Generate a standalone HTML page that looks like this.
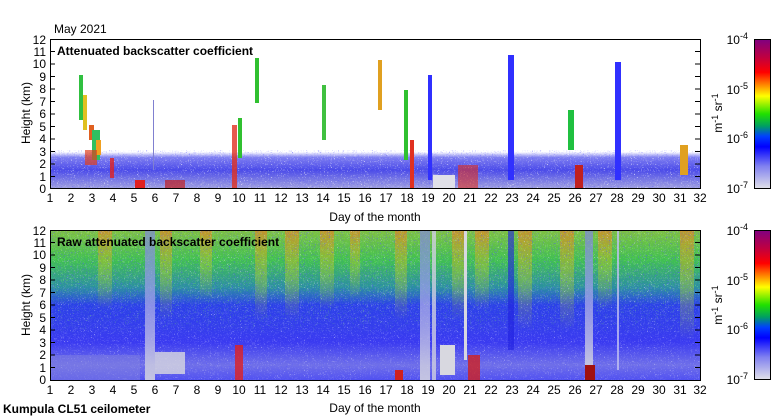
<!DOCTYPE html>
<html><head><meta charset="utf-8"><style>
html,body{margin:0;padding:0;background:#fff;width:780px;height:420px;overflow:hidden}
svg{display:block}
text{font-family:"Liberation Sans",sans-serif;font-size:12px;fill:#000}
</style></head><body>
<svg width="780" height="420" viewBox="0 0 780 420" xmlns="http://www.w3.org/2000/svg">
<defs>
<linearGradient id="cb" x1="0" y1="0" x2="0" y2="1">
<stop offset="0" stop-color="#800080"/><stop offset="0.12" stop-color="#c00040"/>
<stop offset="0.22" stop-color="#ff0000"/><stop offset="0.3" stop-color="#ff8000"/>
<stop offset="0.38" stop-color="#ffff00"/><stop offset="0.5" stop-color="#20e000"/>
<stop offset="0.58" stop-color="#00a060"/><stop offset="0.65" stop-color="#0040ff"/>
<stop offset="0.72" stop-color="#0000ff"/><stop offset="0.85" stop-color="#8080f0"/>
<stop offset="1" stop-color="#e0e0e8"/></linearGradient>
<linearGradient id="band" x1="0" y1="0" x2="0" y2="1">
<stop offset="0" stop-color="#fff"/><stop offset="0.15" stop-color="#8080f0"/>
<stop offset="0.5" stop-color="#4a4ae8"/><stop offset="1" stop-color="#a0a0e0"/></linearGradient>
<linearGradient id="raw" x1="0" y1="0" x2="0" y2="1">
<stop offset="0" stop-color="#80c040"/><stop offset="0.2" stop-color="#40c050"/>
<stop offset="0.38" stop-color="#2a90a0"/><stop offset="0.5" stop-color="#2a40e8"/>
<stop offset="0.75" stop-color="#3a3af0"/><stop offset="0.9" stop-color="#7070e8"/>
<stop offset="1" stop-color="#5050f0"/></linearGradient>
<linearGradient id="warm" x1="0" y1="0" x2="0" y2="1">
<stop offset="0" stop-color="#e08020" stop-opacity="0.7"/><stop offset="0.5" stop-color="#c0d020" stop-opacity="0.4"/><stop offset="1" stop-color="#c0d020" stop-opacity="0"/></linearGradient>
<linearGradient id="pale" x1="0" y1="0" x2="0" y2="1">
<stop offset="0" stop-color="#8080f0" stop-opacity="0.6"/><stop offset="1" stop-color="#d0d0e0" stop-opacity="0.9"/></linearGradient>
<linearGradient id="fadeW" x1="0" y1="0" x2="0" y2="1">
<stop offset="0" stop-color="#fff" stop-opacity="0"/><stop offset="0.5" stop-color="#fff" stop-opacity="1"/><stop offset="1" stop-color="#fff" stop-opacity="1"/></linearGradient>
<filter id="nzw" x="0" y="0" width="1" height="1"><feTurbulence type="turbulence" baseFrequency="0.7" numOctaves="1" seed="3"/><feColorMatrix values="0 0 0 0 1  0 0 0 0 1  0 0 0 0 1  0 0 0 3 -0.9"/></filter>
<filter id="nzg" x="0" y="0" width="1" height="1"><feTurbulence type="turbulence" baseFrequency="0.6" numOctaves="1" seed="9"/><feColorMatrix values="0 0 0 0 0.2  0 0 0 0 0.85  0 0 0 0 0.1  0 0 0 3 -0.8"/></filter>
<filter id="nzb" x="0" y="0" width="1" height="1"><feTurbulence type="turbulence" baseFrequency="0.65" numOctaves="1" seed="5"/><feColorMatrix values="0 0 0 0 0.1  0 0 0 0 0.1  0 0 0 0 1  0 0 0 3 -0.8"/></filter>
<clipPath id="cTop"><rect x="50" y="39" width="650" height="149"/></clipPath>
<clipPath id="cBot"><rect x="50" y="230" width="650" height="150"/></clipPath>
<mask id="mUp"><rect x="50" y="230" width="650" height="150" fill="url(#mg)"/></mask>
<linearGradient id="mg" x1="0" y1="0" x2="0" y2="1"><stop offset="0" stop-color="#fff"/><stop offset="0.55" stop-color="#fff" stop-opacity="0.5"/><stop offset="0.7" stop-color="#000"/></linearGradient>
</defs>

<text x="54" y="33">May 2021</text>

<!-- TOP PLOT -->
<g clip-path="url(#cTop)">
<rect x="50" y="39" width="650" height="149" fill="#fff"/>
<rect x="50" y="152" width="650" height="36" fill="url(#band)"/>
<rect x="50" y="150" width="650" height="38" filter="url(#nzb)" opacity="0.6"/>
<rect x="50" y="150" width="650" height="38" filter="url(#nzw)" opacity="0.8"/>
<rect x="50" y="146" width="650" height="14" fill="url(#fadeW)" opacity="0" />
<!-- clouds -->
<rect x="79" y="75" width="4" height="45" fill="#30c040"/>
<rect x="83" y="95" width="4" height="35" fill="#e0c020"/>
<rect x="89" y="125" width="5" height="15" fill="#e06020"/>
<rect x="92" y="130" width="8" height="30" fill="#30c060"/>
<rect x="96" y="140" width="5" height="15" fill="#f0a020"/>
<rect x="85" y="150" width="12" height="15" fill="#e04020" opacity="0.7"/>
<rect x="110" y="158" width="4" height="20" fill="#e02020" opacity="0.8"/>
<rect x="135" y="180" width="10" height="8" fill="#e02020"/>
<rect x="165" y="180" width="20" height="8" fill="#c02020" opacity="0.7"/>
<rect x="153" y="100" width="1" height="70" fill="#8080d0"/>
<rect x="232" y="125" width="5" height="63" fill="#e03020" opacity="0.8"/>
<rect x="238" y="118" width="4" height="40" fill="#30c030"/>
<rect x="255" y="58" width="4" height="45" fill="#30c030"/>
<rect x="322" y="85" width="4" height="55" fill="#40c040"/>
<rect x="378" y="60" width="4" height="50" fill="#e0a020"/>
<rect x="404" y="90" width="4" height="70" fill="#30c030"/>
<rect x="410" y="140" width="4" height="48" fill="#e03020"/>
<rect x="428" y="75" width="4" height="105" fill="#3030ff"/>
<rect x="433" y="175" width="22" height="13" fill="#e0e0e8"/>
<rect x="458" y="165" width="20" height="23" fill="#e03020" opacity="0.6"/>
<rect x="508" y="55" width="6" height="125" fill="#3030ff"/>
<rect x="568" y="110" width="6" height="40" fill="#20c040"/>
<rect x="575" y="165" width="8" height="23" fill="#c02020"/>
<rect x="615" y="62" width="6" height="118" fill="#3030ff"/>
<rect x="680" y="145" width="8" height="30" fill="#e0a020"/>
</g>
<rect x="50.5" y="39.5" width="650" height="149" fill="none" stroke="#000" stroke-width="1"/>
<text x="57" y="55" style="font-weight:bold">Attenuated backscatter coefficient</text>

<!-- BOTTOM PLOT -->
<g clip-path="url(#cBot)">
<rect x="50" y="230" width="650" height="150" fill="url(#raw)"/>
<g>
<rect x="98" y="230" width="14" height="80" fill="url(#warm)"/>
<rect x="160" y="230" width="12" height="90" fill="url(#warm)"/>
<rect x="200" y="230" width="12" height="70" fill="url(#warm)"/>
<rect x="255" y="230" width="12" height="90" fill="url(#warm)"/>
<rect x="285" y="230" width="14" height="90" fill="url(#warm)"/>
<rect x="320" y="230" width="14" height="80" fill="url(#warm)"/>
<rect x="350" y="230" width="10" height="70" fill="url(#warm)"/>
<rect x="395" y="230" width="12" height="90" fill="url(#warm)"/>
<rect x="452" y="230" width="12" height="90" fill="url(#warm)"/>
<rect x="475" y="230" width="14" height="80" fill="url(#warm)"/>
<rect x="518" y="230" width="14" height="100" fill="url(#warm)"/>
<rect x="560" y="230" width="14" height="100" fill="url(#warm)"/>
<rect x="598" y="230" width="14" height="80" fill="url(#warm)"/>
<rect x="680" y="230" width="14" height="110" fill="url(#warm)"/>
</g>
<rect x="50" y="230" width="650" height="150" filter="url(#nzg)" mask="url(#mUp)" opacity="0.8"/>
<rect x="50" y="230" width="650" height="150" filter="url(#nzb)" opacity="0.7"/>
<rect x="50" y="230" width="650" height="150" filter="url(#nzw)" opacity="0.5"/>
<rect x="145" y="230" width="10" height="150" fill="url(#pale)"/>
<rect x="155" y="352" width="30" height="22" fill="#d8d8e0" opacity="0.8"/>
<rect x="420" y="230" width="10" height="150" fill="url(#pale)"/>
<rect x="432" y="230" width="4" height="150" fill="#d0d0e0" opacity="0.8"/>
<rect x="440" y="345" width="15" height="30" fill="#d8d8e0"/>
<rect x="464" y="230" width="3" height="130" fill="#d8d8e0"/>
<rect x="508" y="230" width="6" height="120" fill="#2020e0" opacity="0.6"/>
<rect x="585" y="230" width="8" height="140" fill="url(#pale)"/>
<rect x="617" y="230" width="2" height="140" fill="#c0c0f0" opacity="0.8"/>
<rect x="50" y="355" width="90" height="25" fill="#8080e0" opacity="0.5"/>
<rect x="395" y="370" width="8" height="10" fill="#d02020"/>
<rect x="468" y="355" width="12" height="25" fill="#d02020" opacity="0.8"/>
<rect x="585" y="365" width="10" height="15" fill="#a01010"/>
<rect x="235" y="345" width="8" height="35" fill="#e02020" opacity="0.8"/>
</g>
<rect x="50.5" y="230.5" width="650" height="150" fill="none" stroke="#000"/>
<text x="57" y="246" style="font-weight:bold">Raw attenuated backscatter coefficient</text>

<!-- Y ticks -->
<g stroke="#000" stroke-width="1">
<path d="M50 176.5h5M50 164h5M50 151.5h5M50 139h5M50 126.5h5M50 114h5M50 101.5h5M50 89h5M50 76.5h5M50 64h5M50 51.5h5M695 176.5h5M695 164h5M695 151.5h5M695 139h5M695 126.5h5M695 114h5M695 101.5h5M695 89h5M695 76.5h5M695 64h5M695 51.5h5"/>
<path d="M50 367.5h5M50 355h5M50 342.5h5M50 330h5M50 317.5h5M50 305h5M50 292.5h5M50 280h5M50 267.5h5M50 255h5M50 242.5h5M695 367.5h5M695 355h5M695 342.5h5M695 330h5M695 317.5h5M695 305h5M695 292.5h5M695 280h5M695 267.5h5M695 255h5M695 242.5h5"/>
</g>
<g text-anchor="end">
<text x="46" y="193">0</text><text x="46" y="181">1</text><text x="46" y="168">2</text><text x="46" y="156">3</text><text x="46" y="143">4</text><text x="46" y="131">5</text><text x="46" y="118">6</text><text x="46" y="106">7</text><text x="46" y="93">8</text><text x="46" y="81">9</text><text x="46" y="68">10</text><text x="46" y="56">11</text><text x="46" y="44">12</text>
<text x="46" y="384">0</text><text x="46" y="372">1</text><text x="46" y="359">2</text><text x="46" y="347">3</text><text x="46" y="334">4</text><text x="46" y="322">5</text><text x="46" y="309">6</text><text x="46" y="297">7</text><text x="46" y="284">8</text><text x="46" y="272">9</text><text x="46" y="259">10</text><text x="46" y="247">11</text><text x="46" y="235">12</text>
</g>
<text transform="translate(30,113) rotate(-90)" text-anchor="middle">Height (km)</text>
<text transform="translate(30,305) rotate(-90)" text-anchor="middle">Height (km)</text>

<!-- X labels -->
<g text-anchor="middle">
<text x="50" y="202">1</text><text x="71" y="202">2</text><text x="92" y="202">3</text><text x="113" y="202">4</text><text x="134" y="202">5</text><text x="155" y="202">6</text><text x="176" y="202">7</text><text x="197" y="202">8</text><text x="218" y="202">9</text><text x="239" y="202">10</text><text x="260" y="202">11</text><text x="281" y="202">12</text><text x="302" y="202">13</text><text x="323" y="202">14</text><text x="344" y="202">15</text><text x="365" y="202">16</text><text x="386" y="202">17</text><text x="407" y="202">18</text><text x="428" y="202">19</text><text x="449" y="202">20</text><text x="470" y="202">21</text><text x="491" y="202">22</text><text x="512" y="202">23</text><text x="533" y="202">24</text><text x="554" y="202">25</text><text x="575" y="202">26</text><text x="596" y="202">27</text><text x="617" y="202">28</text><text x="638" y="202">29</text><text x="659" y="202">30</text><text x="680" y="202">31</text><text x="700" y="202">32</text>
<text x="50" y="394">1</text><text x="71" y="394">2</text><text x="92" y="394">3</text><text x="113" y="394">4</text><text x="134" y="394">5</text><text x="155" y="394">6</text><text x="176" y="394">7</text><text x="197" y="394">8</text><text x="218" y="394">9</text><text x="239" y="394">10</text><text x="260" y="394">11</text><text x="281" y="394">12</text><text x="302" y="394">13</text><text x="323" y="394">14</text><text x="344" y="394">15</text><text x="365" y="394">16</text><text x="386" y="394">17</text><text x="407" y="394">18</text><text x="428" y="394">19</text><text x="449" y="394">20</text><text x="470" y="394">21</text><text x="491" y="394">22</text><text x="512" y="394">23</text><text x="533" y="394">24</text><text x="554" y="394">25</text><text x="575" y="394">26</text><text x="596" y="394">27</text><text x="617" y="394">28</text><text x="638" y="394">29</text><text x="659" y="394">30</text><text x="680" y="394">31</text><text x="700" y="394">32</text>
<text x="375" y="221">Day of the month</text>
<text x="375" y="412">Day of the month</text>
</g>
<text x="3" y="413" style="font-weight:bold">Kumpula CL51 ceilometer</text>

<!-- Colorbars -->
<rect x="754.5" y="39.5" width="16" height="149" fill="url(#cb)" stroke="#000"/>
<rect x="754.5" y="230.5" width="16" height="149" fill="url(#cb)" stroke="#000"/>
<g text-anchor="end">
<text x="748" y="44">10<tspan dy="-5" font-size="9">-4</tspan></text>
<text x="748" y="94">10<tspan dy="-5" font-size="9">-5</tspan></text>
<text x="748" y="143">10<tspan dy="-5" font-size="9">-6</tspan></text>
<text x="748" y="193">10<tspan dy="-5" font-size="9">-7</tspan></text>
<text x="748" y="235">10<tspan dy="-5" font-size="9">-4</tspan></text>
<text x="748" y="285">10<tspan dy="-5" font-size="9">-5</tspan></text>
<text x="748" y="334">10<tspan dy="-5" font-size="9">-6</tspan></text>
<text x="748" y="384">10<tspan dy="-5" font-size="9">-7</tspan></text>
</g>
<text transform="translate(722,113) rotate(-90)" text-anchor="middle">m<tspan dy="-4" font-size="9">-1</tspan><tspan dy="4"> sr</tspan><tspan dy="-4" font-size="9">-1</tspan></text>
<text transform="translate(722,305) rotate(-90)" text-anchor="middle">m<tspan dy="-4" font-size="9">-1</tspan><tspan dy="4"> sr</tspan><tspan dy="-4" font-size="9">-1</tspan></text>
</svg>
</body></html>
